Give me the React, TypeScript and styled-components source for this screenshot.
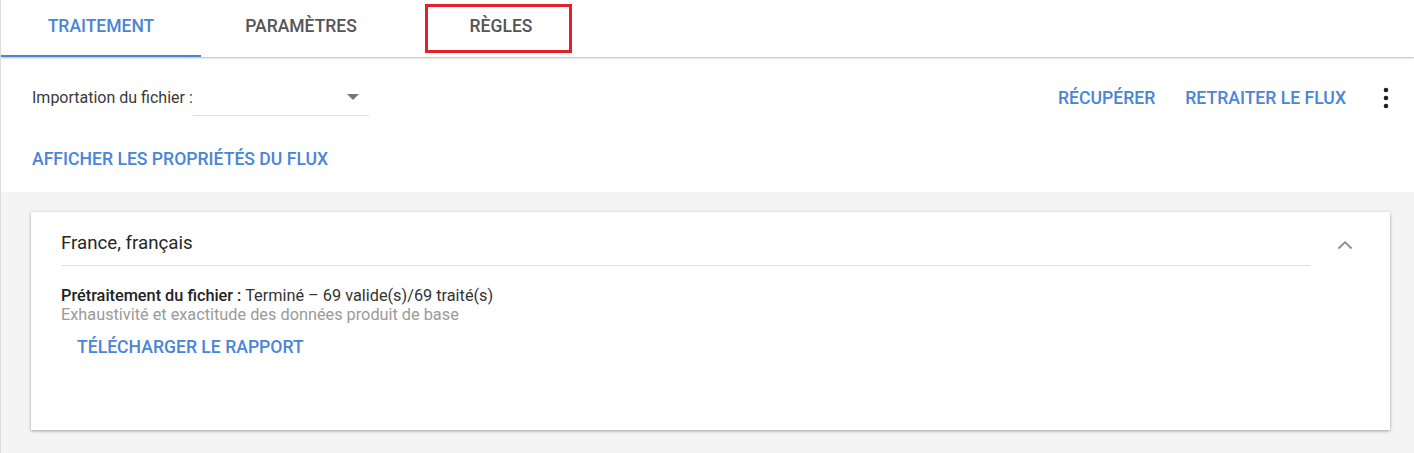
import styled, { createGlobalStyle } from 'styled-components';
import { ReactElement } from 'react';

const GlobalStyle = createGlobalStyle`
  html, body {
    margin: 0;
    padding: 0;
    background: #ffffff;
    font-family: Roboto, "Liberation Sans", Arial, sans-serif;
  }
  * { box-sizing: border-box; }
`;

const BLUE = '#4a85d6';

const Page = styled.div`
  width: 1414px;
  height: 453px;
  border-left: 1px solid #dcdcdc;
  display: flex;
  flex-direction: column;
  overflow: hidden;
`;

const TabBar = styled.div`
  height: 57px;
  display: flex;
  flex-shrink: 0;
  background: #fff;
  box-shadow: 0 1px 2px rgba(0, 0, 0, 0.28);
  position: relative;
  z-index: 1;
`;

const Tab = styled.div<{ $active?: boolean }>`
  position: relative;
  width: 200px;
  display: flex;
  align-items: center;
  justify-content: center;
  padding-bottom: 3px;
  font-size: 17.5px;
  font-weight: 500;
  text-transform: uppercase;
  color: ${p => (p.$active ? BLUE : '#555')};
  border-bottom: 2px solid ${p => (p.$active ? BLUE : 'transparent')};
`;

const Highlight = styled.span`
  position: absolute;
  left: 24px;
  top: 4px;
  width: 147px;
  height: 49px;
  border: 3px solid #e3202b;
  pointer-events: none;
`;

const Toolbar = styled.div`
  height: 80px;
  display: flex;
  align-items: center;
  padding: 1px 16px 0 31px;
  flex-shrink: 0;
`;

const Label = styled.span`
  font-size: 16px;
  color: #3a3a3a;
  white-space: nowrap;
`;

const Select = styled.div`
  width: 176px;
  height: 36px;
  margin-left: 0;
  border-bottom: 1px solid #dedede;
  display: flex;
  align-items: center;
  justify-content: flex-end;
  padding: 0 10px 0 0;
`;

const Spacer = styled.div`
  flex: 1;
`;

const TextButton = styled.button`
  border: 0;
  background: none;
  font-family: inherit;
  font-size: 17.6px;
  font-weight: 500;
  text-transform: uppercase;
  color: ${BLUE};
  padding: 8px 0;
  cursor: pointer;
  white-space: nowrap;
`;

const ActionGroup = styled.div`
  display: flex;
  align-items: center;
  gap: 30px;
`;

const IconButton = styled.div`
  width: 24px;
  height: 24px;
  display: flex;
  align-items: center;
  justify-content: center;
  margin-left: 28px;
`;

const PropsRow = styled.div`
  height: 55px;
  display: flex;
  align-items: flex-start;
  padding: 4px 0 0 31px;
  flex-shrink: 0;
`;

const Content = styled.div`
  flex: 1;
  background: #f4f4f4;
  padding: 20px 24px 0 30px;
`;

const Card = styled.div`
  background: #fff;
  height: 218px;
  box-shadow: 0 1px 3px rgba(0, 0, 0, 0.35);
  padding: 0 0 0 30px;
`;

const CardHeader = styled.div`
  display: flex;
  align-items: stretch;
  height: 54px;
`;

const CardTitle = styled.div`
  flex: 1;
  display: flex;
  align-items: center;
  padding-top: 8px;
  font-size: 18.7px;
  color: #262626;
  border-bottom: 1px solid #e0e0e0;
`;

const Collapse = styled.div`
  width: 80px;
  display: flex;
  align-items: center;
  justify-content: center;
  padding: 12px 10px 0 0;
`;

const Body = styled.div`
  padding-top: 20px;
  font-size: 16.3px;
  line-height: 19px;
  color: #333;
`;

const Strong = styled.span`
  font-weight: 500;
  color: #222;
`;

const Muted = styled.div`
  color: #9a9a9a;
`;

const ReportButton = styled(TextButton)`
  margin: 5px 0 0 16px;
`;

function Caret(): ReactElement {
  return (
    <svg width="12" height="6" viewBox="0 0 12 6">
      <path d="M0 0 L12 0 L6 6 Z" fill="#757575" />
    </svg>
  );
}

function MoreVert(): ReactElement {
  return (
    <svg width="6" height="22" viewBox="0 0 6 22">
      <circle cx="3" cy="3" r="2.3" fill="#222" />
      <circle cx="3" cy="11" r="2.3" fill="#222" />
      <circle cx="3" cy="19" r="2.3" fill="#222" />
    </svg>
  );
}

function ExpandLess(): ReactElement {
  return (
    <svg width="16" height="10" viewBox="0 0 16 10">
      <path d="M1.5 8.5 L8 2.2 L14.5 8.5" fill="none" stroke="#8a8a8a" strokeWidth="1.8" />
    </svg>
  );
}

export default function App(): ReactElement {
  return (
    <>
      <GlobalStyle />
      <Page>
        <TabBar>
          <Tab $active>Traitement</Tab>
          <Tab>Paramètres</Tab>
          <Tab>
            Règles
            <Highlight />
          </Tab>
        </TabBar>

        <Toolbar>
          <Label>Importation du fichier :</Label>
          <Select>
            <Caret />
          </Select>
          <Spacer />
          <ActionGroup>
            <TextButton>Récupérer</TextButton>
            <TextButton>Retraiter le flux</TextButton>
          </ActionGroup>
          <IconButton>
            <MoreVert />
          </IconButton>
        </Toolbar>

        <PropsRow>
          <TextButton>Afficher les propriétés du flux</TextButton>
        </PropsRow>

        <Content>
          <Card>
            <CardHeader>
              <CardTitle>France, français</CardTitle>
              <Collapse>
                <ExpandLess />
              </Collapse>
            </CardHeader>
            <Body>
              <div>
                <Strong>Prétraitement du fichier :</Strong> Terminé – 69 valide(s)/69 traité(s)
              </div>
              <Muted>Exhaustivité et exactitude des données produit de base</Muted>
              <ReportButton>Télécharger le rapport</ReportButton>
            </Body>
          </Card>
        </Content>
      </Page>
    </>
  );
}
